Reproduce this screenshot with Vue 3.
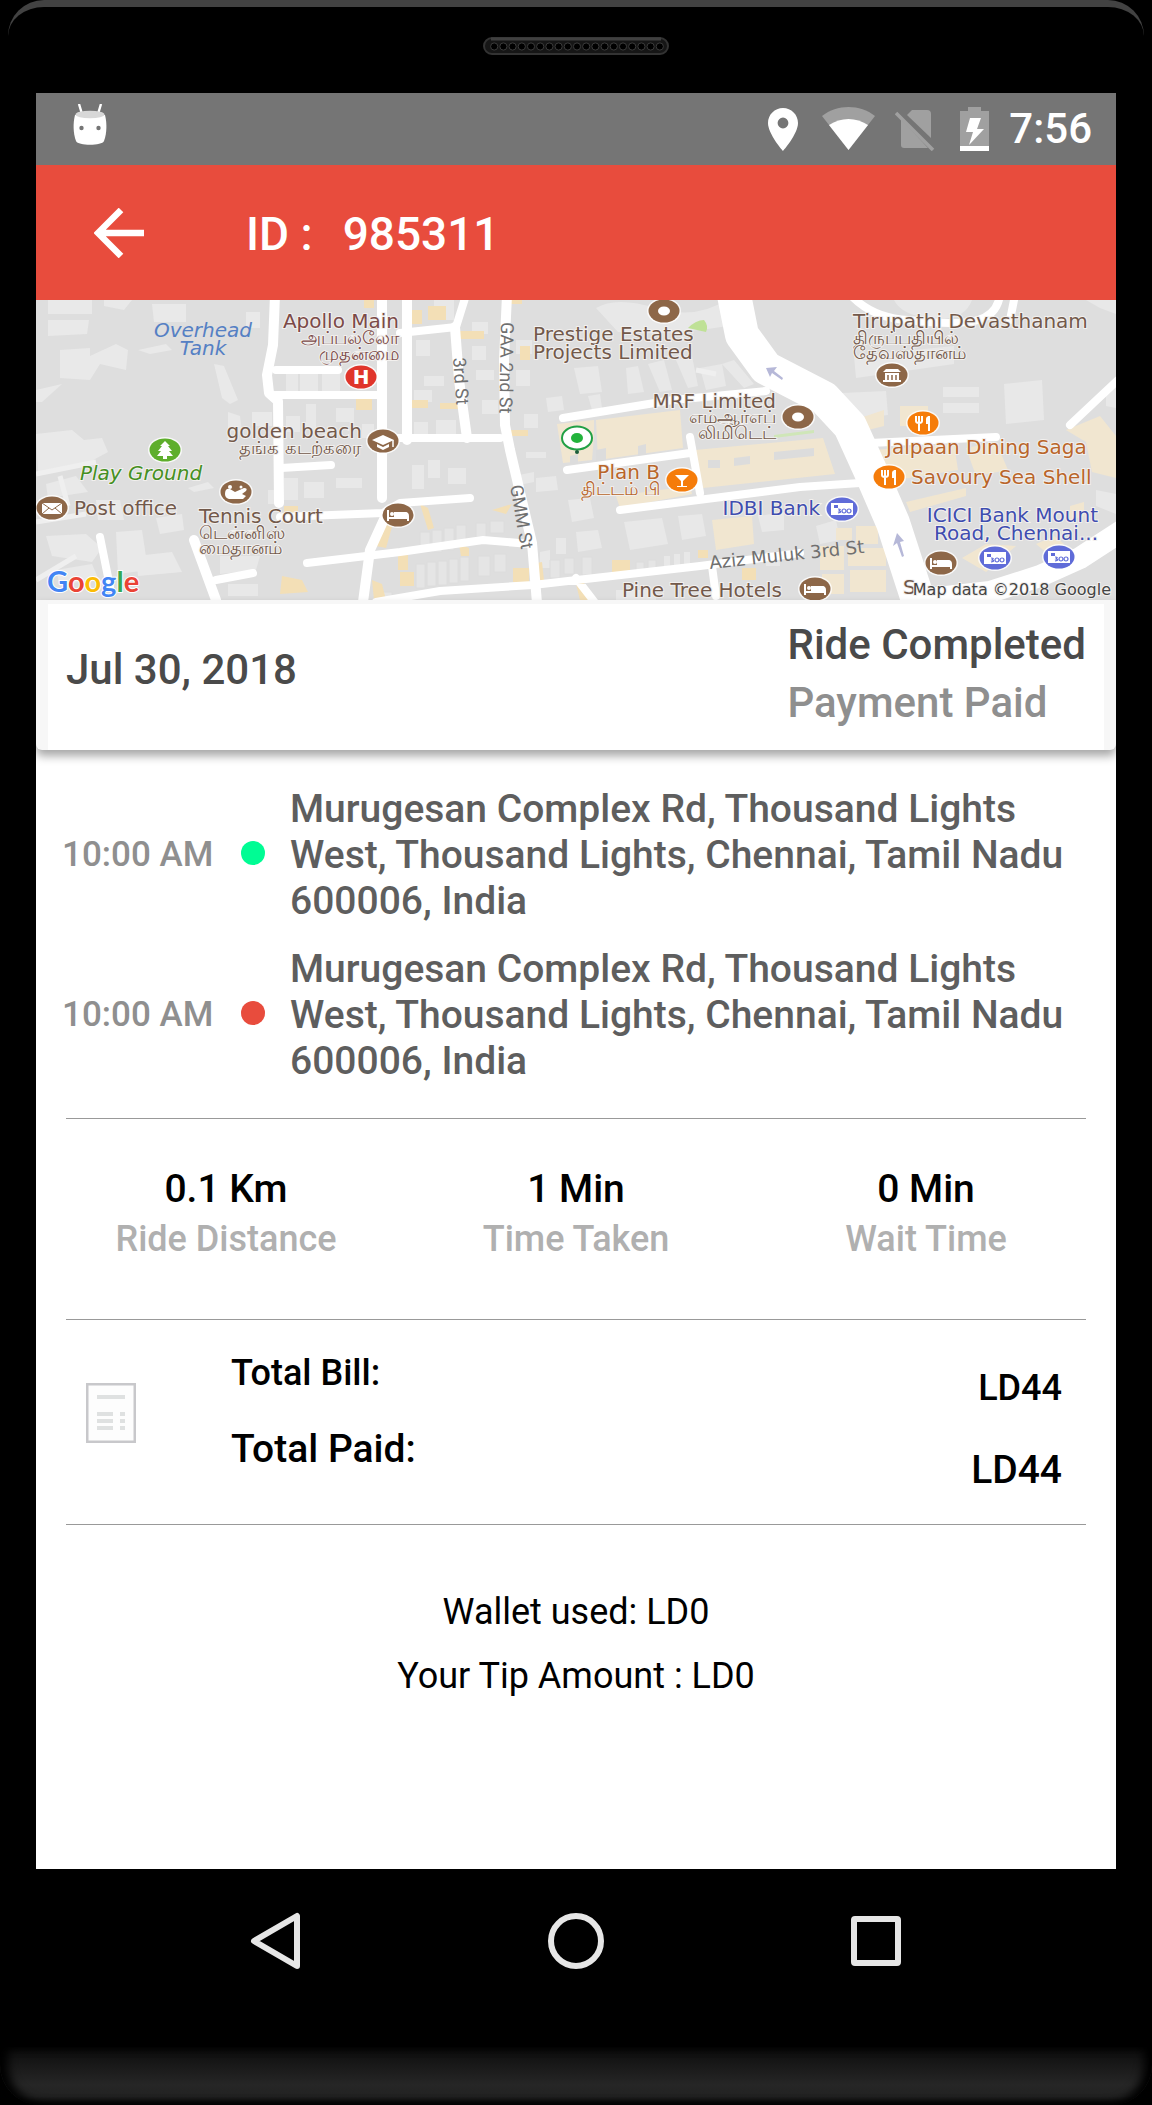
<template>
  <div class="phone">
    <div class="top-edge"></div>
    <div class="phone-top">
      <svg class="speaker" viewBox="0 0 186 18" aria-hidden="true">
        <rect x="1" y="1" width="184" height="16" rx="8" fill="#161616" stroke="#333" stroke-width="2" />
        <path d="M8 2H178" stroke="#404040" stroke-width="3" />
        <circle
          v-for="n in 19"
          :key="n"
          :cx="2 + n * 9.2"
          cy="9.5"
          r="3.6"
          fill="#000"
          stroke="#3b3b3b"
          stroke-width="1"
        />
      </svg>
    </div>

    <div class="screen">
      <div class="status-bar">
        <svg class="android" viewBox="0 0 34 42" aria-hidden="true">
          <path d="M6 0l3 10M28 0l-3 10" stroke="#fff" stroke-width="2.4" />
          <path d="M2 11C0 19 0 29 3 37c2 5 26 5 28 0 3-8 3-18 1-26z" fill="#fff" />
          <ellipse cx="17" cy="10.500" rx="14.500" ry="3.800" fill="#d8d8d8" />
          <circle cx="8.500" cy="24" r="2.200" fill="#757575" />
          <circle cx="25.500" cy="24" r="2.200" fill="#757575" />
        </svg>
        <div class="status-icons">
          <svg class="s-pin" viewBox="0 0 34 44" aria-hidden="true">
            <path fill="#fff" fill-rule="evenodd" d="M15 1C6.700 1 0 7.700 0 16c0 11 15 28 15 28s15-17 15-28C30 7.700 23.300 1 15 1zm0 9.600a5.400 5.400 0 1 1 0 10.800 5.400 5.400 0 0 1 0-10.800z" />
          </svg>
          <svg class="s-wifi" viewBox="0 0 53 44" aria-hidden="true">
            <path d="M0 9C15-3 38-3 53 9L26.500 43z" fill="#a0a0a0" />
            <path d="M7 18c12-8 27-8 39 0L26.500 43z" fill="#fff" />
          </svg>
          <svg class="s-sim" viewBox="0 0 45 44" aria-hidden="true">
            <path d="M12 8l5-5h15q4 0 4 4v24z" fill="#a0a0a0" />
            <path d="M6 12l27 29H9q-3 0-3-3z" fill="#a0a0a0" />
            <path d="M1 6l37 37" stroke="#a0a0a0" stroke-width="3.500" />
          </svg>
          <svg class="s-battery" viewBox="0 0 29 44" aria-hidden="true">
            <path d="M8 0h13v4h8v35H0V4h8z" fill="#a0a0a0" />
            <path d="M0 39h29v5H0z" fill="#fff" />
            <path d="M10 11h11l-4 11h7L9 38l4-13H6z" fill="#fff" />
          </svg>
          <span class="clock">7:56</span>
        </div>
      </div>

      <header class="app-bar">
        <button class="back" type="button" aria-label="Back">
          <svg viewBox="0 0 50 50" aria-hidden="true">
            <path d="M27 2L4 25l23 23M4 25h46" fill="none" stroke="#fff" stroke-width="6.500" />
          </svg>
        </button>
        <h1><span>ID :</span><span>{{ ride.id }}</span></h1>
      </header>

      <svg class="map" viewBox="0 0 1080 300" role="img" aria-label="Ride map">
        <defs>
          <g id="bed">
            <path d="M-10-5v11M-10 3H10M10 6v-5q0-3-3-3H-3v4" fill="none" stroke="#fff" stroke-width="2" />
            <path d="M-3-3h10q3 0 3 3v3H-3z" fill="#fff" />
            <circle cx="-6" cy="-1" r="2" fill="#fff" />
          </g>
          <g id="cap">
            <path d="M-11-1L0-6 11-1 0 4z M-6 3l6 3 6-3v3l-6 3-6-3z" fill="#fff" />
            <path d="M10-1v7" stroke="#fff" stroke-width="1.500" />
          </g>
          <g id="tree">
            <path d="M0-9l5 5H3l4 5H4l4 5H2v3h-4V6h-6l4-5h-3l4-5h-2z" fill="#fff" />
          </g>
          <g id="racket">
            <path d="M-11 2q0-6 5-5l5 3 9-4q4 0 2 3l-4 3 4 2-3 3H-7q-4-1-4-5z" fill="#fff" />
            <circle cx="-6" cy="-5" r="2" fill="#fff" />
            <circle cx="5" cy="-5" r="1.500" fill="#fff" />
          </g>
          <g id="mail">
            <path d="M-10-5h20V6h-20z" fill="#fff" />
            <path d="M-10-5L0 2l10-7M-10 6l7-6M10 6L3 0" fill="none" stroke="#8d6748" />
          </g>
          <g id="ring"><ellipse rx="6" ry="4.500" fill="#fff" /></g>
          <g id="temple">
            <path d="M-9-3l3-3H6l3 3zM-7-2H7v7H-7zM-9 5H9v2H-9z" fill="#fff" />
            <path d="M-4 5V0M0 5V0M4 5V0" stroke="#8d6748" stroke-width="1.500" />
          </g>
          <g id="glass">
            <path d="M-7-5H7L1 1v5h4v1H-5V6h4V1z" fill="#fff" />
          </g>
          <g id="fork">
            <path d="M-7-7v5q0 2 3 2t3-2v-5M-4-7V8M6 8V-7" fill="none" stroke="#fff" stroke-width="2" />
            <path d="M3 1v-5q0-3 4-3V1z" fill="#fff" />
          </g>
          <g id="note">
            <path d="M-11-6h22V6h-22z" fill="#fff" />
            <path d="M-8-4h4v3h-4z" fill="#5f6bd8" />
            <g fill="none" stroke="#5f6bd8" stroke-width="1.200">
              <path d="M-4 0q4 0 1 2q4 1-1 2" />
              <circle cx="2" cy="2" r="2" />
              <circle cx="7" cy="2" r="2" />
            </g>
          </g>
        </defs>

        <rect width="1080" height="300" fill="#dedede" />

        <!-- buildings -->
        <path
          fill="#e9e9e9"
          d="M12 0h44v14h-44zM12 20h41l-2 14-39 2zM68 0h28l-8 10-20-4zM116 4h34v18h-32zM24 50l30-2v8l26-12 12 6-2 20-26-6-10 16-30-2zM102 50l28-6 6 6-22 4zM0 90l26-6-20 18H0zM178 64l10 2 14 34-8 4-8-6zM0 134l36-4 12 10 18-2 6 14-26 14-44 6zM10 184l30-8 12 16-40 6zM152 188l20-6 6 6-20 4zM60 200h24l4 20H62zM120 218l26-4 2 16-24 4zM10 236l40-2 16 14-10 14-40-6zM80 232l26-2 6 40-30 4zM100 256l36-4 10 20-44 4zM20 270l36-6 6 14-38 8zM192 112l12 4 2 16-14-2zM216 112h20v14h-20zM210 12h14v16h-14z"
        />
        <path
          fill="#e8e8e8"
          d="M250 74h12v18h-12zM264 72h18v20h-18zM286 70h18v22h-18zM300 108h18v14h-18zM270 104h10v26h-10zM250 116h14v16h-14zM326 124h12v14h-12zM380 40h14v16h-14zM378 90h18v12h-18zM388 76h20v10h-20zM400 120h20v14h-20zM378 122h14v12h-14zM248 178h14v22h-14zM268 182h20v16h-20zM300 178h26v10h-26zM232 190h8v14h-8zM184 256h40l-4 14-36 4zM192 284h30v12h-30zM376 165h12v24h-12zM392 160h12v18h-12zM412 168h18v16h-18zM398 0h20v20h-20zM436 22h16v12h-16zM436 46h14v14h-14zM446 100h16v14h-16zM440 70h18v10h-18zM480 40h16v14h-16zM480 70h14v16h-14z"
        />
        <path
          fill="#e8e8e8"
          d="M538 68l24-2 4 26-22 2zM510 98l16-2 2 14-16 2zM552 96l12-2 2 14-10 2zM590 68l12-2 6 26-16 2zM612 64l16-4 8 30-12 2zM640 60l16-4 6 30-10 2zM664 68l22-4 4 22-20 4zM686 64l12-4 20 24-10 4zM488 114h14v14h-14zM490 152h20v6h-20zM500 178l20-2 2 14-22 2zM532 200l22-2 4 20-22 4zM540 232l22-2 4 18-24 4zM520 238h10v16h-10zM588 222l38-4 6 26-38 6zM642 216l24-2 4 22-24 4zM722 216l26-4v18l-22 2zM504 252l10-2v18h-10zM580 290h40v10h-40zM628 256h6v12h-6zM638 254h6v14h-6zM648 252h6v14h-6zM478 176l20-4v10l-20 4zM806 93l44-2 2 24-36 4zM907 87h36v10h-36zM907 103h36v10h-36zM968 84l38-4 2 40-38 4zM818 56l100-10v18l-98 14zM560 8q20-12 60 0t70-8l2 26q-60 10-110 6zM858 0h78q-8 22-40 18-30-2-38-18zM1050 0h30v14l-16-6zM1070 90l10-8v26l-10-2zM1060 190l20 4v20l-20-8zM730 252h14v14h-14zM780 226l20-6 4 20-20 4z"
        />
        <path
          fill="#e5e5e5"
          stroke="#dcdcdc"
          d="M384 232h10v20h-10zM396 230h10v22h-10zM408 228h10v22h-10zM420 225h10v22h-10zM380 264h9v24h-9zM391 262h9v24h-9zM402 261h9v24h-9zM413 259h9v24h-9zM424 257h9v24h-9zM440 223h10v14h-10zM454 221h14v12h-14zM442 256h12v20h-12zM458 254h12v18h-12zM366 296h10v4h-10zM346 292h10v8h-10zM514 260h10v18h-10zM528 258h10v16h-10zM546 257h10v18h-10zM600 262h8v12h-8zM612 260h8v12h-8z"
        />
        <path
          fill="#f1e6d0"
          d="M521 124l37-4v16l-2 24-29 3zM560 120l84-10 3 38-85 12zM659 150l128-12 12 36-132 14zM580 196l74-10 2 8-72 14zM676 220l40-4 2 28-38 6zM838 150l80-6 4 26-74 12zM930 148l30-6 12 28-32 6zM870 202l60-14v8l-56 16zM864 106h28v20h-28zM824 118l24-8v16l-24 6zM1030 130l34-14 16 20v42l-24-6-6-30zM800 228h16v12h-16zM820 226h22v18h-22zM784 246h24v24h-24zM812 248h38v18h-38zM814 270h36v22h-36zM786 274h22v20h-22zM926 258l24-14 30 2-30 26zM1000 244l18-8 10 8-16 10zM1034 206l14-4v14l-14 4z"
        />
        <path
          fill="#f3dfb6"
          d="M328 0h10v8h-10zM392 6h18v14h-18zM372 10h14v14h-14zM320 98h16v12h-16zM372 100h20v8h-20zM404 103h18v6h-18zM424 31h24v8h-24zM484 46h10v14h-10zM474 130h18v6h-18zM474 0h12v4h-12zM248 206h14v8h-14zM246 276l20 4 6 12-28 2zM340 226l18-6-8 28-10-2zM384 204l8 4 6 20-6 2zM362 252h10v18h-10zM336 280l10 4 4 16h-12zM423 244l10 4v8h-8zM477 268h16v14h-16zM496 264l10-2 2 18h-10zM540 284l8-2 4 18h-8zM576 260h18v12h-18zM456 210l20-6-6 10zM706 268h14v12h-14zM662 250h10v8h-10zM364 272h14v14h-14z"
        />
        <path d="M534 156l8-2v10h-8zM560 150l10-2v14h-10zM602 146l8-2v14l-8 2zM672 160h12v8h-12zM698 158l16-2v8l-16 2zM738 152l40-4v8l-40 4z" fill="#dcdcdc" />
        <path d="M652 28q8-8 16-8 5 6 2 12z" fill="#bfe196" />
        <path d="M738 135l40-5v3l-40 5z" fill="#cfe6b8" />

        <!-- roads -->
        <g fill="none" stroke="#fff" stroke-linecap="round" stroke-linejoin="round">
          <path stroke-width="10" d="M239-5l-2 50-6 30 2 18 9 8 1 102M346-5v203M371-5v145M419 27l4 53 8 58M471-5l-3 65 1 65 5 25 22 93 5 60M350 215l-16 35-7 52M158 240l22 60" />
          <path stroke-width="8" d="M240 95h105M240 70h62M364 33l56-6 10-32M346 138h118M244 217l103-4 17-10 70-5M271 263l93-11 83-12 47 4M340 302l64-11 93-6 167-19 100-13M527 118l110-18 93-9M531 170l123-17M654 137l10 56M584 210l180-23 60-4M834 143l126-6M64 237l10 50M180 280l37-7M245 168l50-3M540 278l20 26M676 266l4 30" />
          <path stroke-width="34" d="M696-15l10 50 24 33 58 30 26 28 20 44 23 53 26 80" />
          <path stroke-width="22" d="M1090 228l-46 30-40 18-50 16-70 8" />
          <path stroke-width="8" d="M812-8q22 26 60 28 50 6 70 0t22-26M979-5l-5 25M1082 80l-48 45" />
        </g>
        <g fill="none" stroke="#efefef" stroke-width="5">
          <path d="M0 174l60-12M24 176l8 30M0 222l50-8M0 280l40-24M660 70l20 4" />
        </g>
        <g fill="#b6b8d8">
          <path d="M730 68l11-1-3 4 9 7-1 2-10-7-2 4zM861 233l7 8-4 1 4 14-2 1-5-14-4 3z" />
        </g>

        <g v-for="(m, i) in markers" :key="i" :transform="`translate(${m.x} ${m.y})`">
          <ellipse rx="17" ry="13" fill="#fff" opacity="0.8" />
          <ellipse rx="15.500" ry="11.500" :fill="m.color" />
          <text v-if="m.letter" class="h-mark" y="7">{{ m.letter }}</text>
          <use v-else :href="'#' + m.icon" />
        </g>
        <g transform="translate(541 138)">
          <ellipse rx="15" ry="11.500" fill="#fff" stroke="#22a045" stroke-width="2" />
          <ellipse rx="6" ry="5" fill="#22b33b" />
          <circle cy="14" r="2" fill="#1b5e3a" />
        </g>

        <text
          v-for="l in labels"
          :key="l.text"
          class="label"
          :class="[l.tone, { tamil: l.tamil }]"
          :x="l.x"
          :y="l.y"
          :text-anchor="l.anchor || 'start'"
        >{{ l.text }}</text>

        <text class="street" transform="translate(417 58) rotate(86)">3rd St</text>
        <text class="street" transform="translate(465 22) rotate(91)">GAA 2nd St</text>
        <text class="street" transform="translate(474 186) rotate(80)">GMM St</text>
        <text class="street wide" transform="translate(674 269) rotate(-6)">Aziz Muluk 3rd St</text>
        <text class="label brown" x="867" y="294">S</text>
        <text class="attribution" x="1075" y="295" text-anchor="end">Map data ©2018 Google</text>
        <text class="logo" x="11" y="292">
          <tspan fill="#4285f4">G</tspan><tspan fill="#ea4335">o</tspan><tspan fill="#fbbc05">o</tspan><tspan fill="#4285f4">g</tspan><tspan fill="#34a853">l</tspan><tspan fill="#ea4335">e</tspan>
        </text>
      </svg>

      <section class="summary">
        <div class="date">{{ ride.date }}</div>
        <div class="state">
          <div>{{ ride.status }}</div>
          <div class="payment">{{ ride.payment }}</div>
        </div>
      </section>

      <section class="trip">
        <div v-for="stop in stops" :key="stop.type" class="stop">
          <span class="time">{{ stop.time }}</span>
          <span class="dot" :class="stop.type"></span>
          <span class="address">{{ stop.address }}</span>
        </div>
      </section>

      <hr>

      <section class="stats">
        <div v-for="s in stats" :key="s.label" class="stat">
          <div class="value">{{ s.value }}</div>
          <div class="caption">{{ s.label }}</div>
        </div>
      </section>

      <hr>

      <section class="bill">
        <svg class="bill-icon" viewBox="0 0 50 60" aria-hidden="true">
          <rect x="1" y="1" width="48" height="58" fill="#fdfdfd" stroke="#c8c8cb" stroke-width="3" />
          <path d="M11 14h28M11 31h16M34 31h5M11 38h16M34 38h5M11 45h16M34 45h5" stroke="#dfe1e1" stroke-width="4" />
        </svg>
        <div class="bill-labels">
          <div>Total Bill:</div>
          <div class="paid">Total Paid:</div>
        </div>
        <div class="bill-amounts">
          <div>{{ ride.bill }}</div>
          <div class="paid">{{ ride.paid }}</div>
        </div>
      </section>

      <hr>

      <section class="extras">
        <p>Wallet used: {{ ride.wallet }}</p>
        <p>Your Tip Amount : {{ ride.tip }}</p>
      </section>
    </div>

    <nav class="nav-bar">
      <button type="button" aria-label="Back">
        <svg viewBox="0 0 60 60" aria-hidden="true">
          <path d="M51 5v50L8 30z" />
        </svg>
      </button>
      <button type="button" aria-label="Home">
        <svg viewBox="0 0 60 60" aria-hidden="true"><circle cx="30" cy="30" r="25" /></svg>
      </button>
      <button type="button" aria-label="Recent apps">
        <svg viewBox="0 0 60 60" aria-hidden="true"><rect x="8" y="8" width="44" height="44" rx="1" /></svg>
      </button>
    </nav>
    <div class="bottom-edge"></div>
  </div>
</template>

<script setup>
import { ref } from 'vue'

const address = 'Murugesan Complex Rd, Thousand Lights West, Thousand Lights, Chennai, Tamil Nadu 600006, India'

const ride = ref({
  id: '985311',
  date: 'Jul 30, 2018',
  status: 'Ride Completed',
  payment: 'Payment Paid',
  bill: 'LD44',
  paid: 'LD44',
  wallet: 'LD0',
  tip: 'LD0'
})

const stops = ref([
  { type: 'pickup', time: '10:00 AM', address },
  { type: 'drop', time: '10:00 AM', address }
])

const stats = ref([
  { value: '0.1 Km', label: 'Ride Distance' },
  { value: '1 Min', label: 'Time Taken' },
  { value: '0 Min', label: 'Wait Time' }
])

const brown = '#8d6748'
const orange = '#f57c0a'
const blue = '#5f6bd8'

const markers = [
  { x: 325, y: 77, color: '#e0352b', letter: 'H' },
  { x: 347, y: 141, color: brown, icon: 'cap' },
  { x: 129, y: 150, color: '#5eae2c', icon: 'tree' },
  { x: 200, y: 192, color: brown, icon: 'racket' },
  { x: 16, y: 208, color: brown, icon: 'mail' },
  { x: 362, y: 215, color: brown, icon: 'bed' },
  { x: 628, y: 11, color: brown, icon: 'ring' },
  { x: 762, y: 117, color: brown, icon: 'ring' },
  { x: 856, y: 75, color: brown, icon: 'temple' },
  { x: 646, y: 180, color: orange, icon: 'glass' },
  { x: 887, y: 123, color: orange, icon: 'fork' },
  { x: 853, y: 177, color: orange, icon: 'fork' },
  { x: 806, y: 209, color: blue, icon: 'note' },
  { x: 959, y: 258, color: blue, icon: 'note' },
  { x: 1023, y: 257, color: blue, icon: 'note' },
  { x: 905, y: 263, color: brown, icon: 'bed' },
  { x: 779, y: 289, color: brown, icon: 'bed' }
]

const labels = [
  { text: 'Overhead', x: 167, y: 37, anchor: 'middle', tone: 'water' },
  { text: 'Tank', x: 167, y: 55, anchor: 'middle', tone: 'water' },
  { text: 'Apollo Main', x: 363, y: 28, anchor: 'end', tone: 'wine' },
  { text: 'அப்பல்லோ', x: 363, y: 44, anchor: 'end', tone: 'wine', tamil: true },
  { text: 'முதன்மை', x: 363, y: 60, anchor: 'end', tone: 'wine', tamil: true },
  { text: 'golden beach', x: 326, y: 138, anchor: 'end', tone: 'brown' },
  { text: 'தங்க கடற்கரை', x: 325, y: 154, anchor: 'end', tone: 'brown', tamil: true },
  { text: 'Play Ground', x: 44, y: 180, tone: 'park' },
  { text: 'Post office', x: 38, y: 215, tone: 'brown' },
  { text: 'Tennis Court', x: 163, y: 223, tone: 'brown' },
  { text: 'டென்னிஸ்', x: 163, y: 239, tone: 'brown', tamil: true },
  { text: 'மைதானம்', x: 163, y: 254, tone: 'brown', tamil: true },
  { text: 'Prestige Estates', x: 497, y: 41, tone: 'brown' },
  { text: 'Projects Limited', x: 497, y: 59, tone: 'brown' },
  { text: 'MRF Limited', x: 740, y: 108, anchor: 'end', tone: 'brown' },
  { text: 'எம்ஆர்எப்', x: 740, y: 123, anchor: 'end', tone: 'brown', tamil: true },
  { text: 'லிமிடெட்', x: 740, y: 139, anchor: 'end', tone: 'brown', tamil: true },
  { text: 'Plan B', x: 624, y: 179, anchor: 'end', tone: 'food' },
  { text: 'திட்டம் பி', x: 624, y: 195, anchor: 'end', tone: 'food', tamil: true },
  { text: 'IDBI Bank', x: 784, y: 215, anchor: 'end', tone: 'bank' },
  { text: 'Pine Tree Hotels', x: 586, y: 297, tone: 'brown' },
  { text: 'Tirupathi Devasthanam', x: 817, y: 28, tone: 'brown' },
  { text: 'திருப்பதியில்', x: 817, y: 44, tone: 'brown', tamil: true },
  { text: 'தேவஸ்தானம்', x: 817, y: 59, tone: 'brown', tamil: true },
  { text: 'Jalpaan Dining Saga', x: 850, y: 154, tone: 'food' },
  { text: 'Savoury Sea Shell', x: 875, y: 184, tone: 'food' },
  { text: 'ICICI Bank Mount', x: 1062, y: 222, anchor: 'end', tone: 'bank' },
  { text: 'Road, Chennai...', x: 1062, y: 240, anchor: 'end', tone: 'bank' }
]
</script>

<style>
body {
  margin: 0;
  background: #000;
}
</style>

<style scoped>
.phone {
  min-height: 100vh;
  display: flex;
  flex-direction: column;
  background: #000;
  font-family: Roboto, "Noto Sans", sans-serif;
  font-weight: 500;
}

.top-edge {
  height: 60px;
  margin: 0 8px -60px;
  box-sizing: border-box;
  border-top: 7px solid #424242;
  border-radius: 36px 36px 0 0;
}

.phone-top {
  display: flex;
  justify-content: center;
  padding: 37px 0 38px;
}

.speaker {
  width: 186px;
  height: 18px;
}

.screen {
  flex: 1;
  margin: 0 36px;
  background: #fff;
}

hr {
  height: 1px;
  margin: 0 30px;
  border: none;
  background: #999;
}

.status-bar {
  display: flex;
  align-items: center;
  justify-content: space-between;
  height: 72px;
  padding: 0 24px 0 37px;
  background: #757575;
  color: #fff;
}

.android {
  width: 34px;
  height: 42px;
  margin-bottom: 8px;
}

.status-icons {
  display: flex;
  align-items: center;
  gap: 20px;
}

.status-icons svg {
  height: 44px;
}

.s-pin {
  width: 34px;
}

.s-wifi {
  width: 53px;
}

.s-sim {
  width: 45px;
}

.s-battery {
  width: 29px;
}

.clock {
  font-size: 42px;
  line-height: 76px;
}

.app-bar {
  display: flex;
  align-items: center;
  gap: 102px;
  height: 135px;
  padding: 0 58px;
  background: #e84c3d;
  color: #fff;
}

.back {
  padding: 0;
  border: none;
  background: none;
  cursor: pointer;
}

.back svg {
  display: block;
  width: 50px;
  height: 50px;
}

.app-bar h1 {
  display: flex;
  gap: 30px;
  margin: 2px 0 0;
  font-size: 46px;
  font-weight: 500;
}

.map {
  display: block;
  width: 100%;
}

.label,
.attribution {
  font-family: "DejaVu Sans", "Noto Sans", sans-serif;
  font-size: 20px;
  font-weight: 400;
  paint-order: stroke;
  stroke: #f2f0ee;
  stroke-width: 2px;
}

.label.tamil {
  font-size: 18px;
}

.brown {
  fill: #72594b;
}

.wine {
  fill: #7b4a48;
}

.food {
  fill: #b9652a;
}

.bank {
  fill: #3f4db0;
}

.water {
  fill: #5580c4;
  font-style: italic;
  stroke: none;
}

.park {
  fill: #458f22;
  font-style: italic;
}

.attribution {
  font-size: 16px;
  fill: #444;
}

.street {
  font-size: 18px;
  font-weight: 400;
  fill: #707070;
}

.street.wide {
  font-family: "DejaVu Sans", sans-serif;
}

.h-mark {
  font-family: "DejaVu Sans", sans-serif;
  font-size: 20px;
  font-weight: 700;
  fill: #fff;
  text-anchor: middle;
}

.logo {
  font-family: Lato, sans-serif;
  font-size: 29px;
  font-weight: 700;
  paint-order: stroke;
  stroke: #fff;
  stroke-width: 2px;
}

.summary {
  position: relative;
  display: flex;
  align-items: center;
  justify-content: space-between;
  height: 146px;
  padding: 0 18px;
  border: solid #f7f7f7;
  border-width: 4px 12px 0;
  border-radius: 0 0 6px 6px;
  box-shadow: 0 6px 10px rgba(0, 0, 0, 0.35);
  background: #fff;
  color: #4a4a4a;
  font-size: 42px;
  line-height: 58px;
}

.date {
  padding-bottom: 14px;
}

.state {
  padding-bottom: 6px;
}

.payment {
  color: #8f8f8f;
}

.trip {
  display: flex;
  flex-direction: column;
  gap: 22px;
  padding: 36px 40px 34px 26px;
}

.stop {
  display: grid;
  grid-template-columns: 179px 49px 1fr;
  align-items: center;
  line-height: 46px;
}

.time {
  font-size: 35px;
  color: #8f8f8f;
}

.dot {
  width: 24px;
  height: 24px;
  margin-bottom: 4px;
  border-radius: 50%;
}

.dot.pickup {
  background: #00fc94;
}

.dot.drop {
  background: #e84c3d;
}

.address {
  font-size: 39px;
  color: #5e5e5e;
}

.stats {
  display: grid;
  grid-template-columns: repeat(3, 1fr);
  padding: 45px 15px 55px;
  text-align: center;
  line-height: 50px;
}

.value {
  font-size: 39px;
  color: #000;
}

.caption {
  font-size: 36px;
  color: #b0b0b0;
}

.bill {
  display: flex;
  align-items: flex-start;
  padding: 15px 54px 13px 50px;
  font-size: 36px;
  color: #000;
}

.bill-icon {
  width: 50px;
  height: 60px;
  margin: 48px 95px 0 0;
}

.bill-labels {
  flex: 1;
  line-height: 76px;
}

.bill-amounts {
  padding-top: 12px;
  line-height: 82px;
  text-align: right;
}

.bill .paid {
  font-size: 39px;
}

.extras {
  padding: 55px 0 110px;
  text-align: center;
  font-size: 36px;
  font-weight: 400;
  line-height: 64px;
  color: #000;
}

.extras p {
  margin: 0;
}

.nav-bar {
  display: flex;
  justify-content: center;
  gap: 240px;
  height: 144px;
}

.nav-bar button {
  padding: 0;
  border: none;
  background: none;
  cursor: pointer;
}

.nav-bar svg {
  display: block;
  width: 60px;
  height: 60px;
  fill: none;
  stroke: #e6e6e6;
  stroke-width: 6;
  stroke-linejoin: round;
}

.bottom-edge {
  height: 58px;
  margin-top: 34px;
  border-radius: 0 0 40px 40px;
  background: linear-gradient(#0c0c0c, #262626 65%, #222 85%, #0a0a0a);
  box-shadow: inset 8px 0 10px #000, inset -8px 0 10px #000;
}
</style>
